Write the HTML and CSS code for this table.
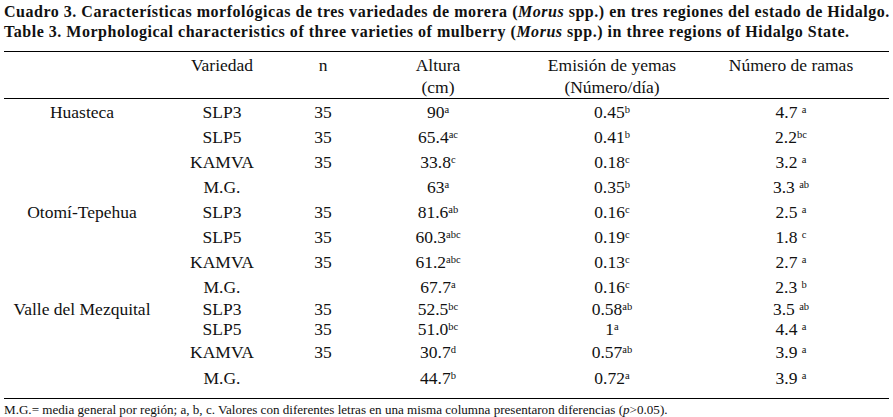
FILE: index.html
```html
<!DOCTYPE html>
<html lang="es">
<head>
<meta charset="utf-8">
<title>Cuadro 3</title>
<link rel="stylesheet" href="styles.css">
</head>
<body>
<div class="page">
  <div class="caption">
    <div class="cap-line">Cuadro 3. Características morfológicas de tres variedades de morera (<i>Morus</i> spp.) en tres regiones del estado de Hidalgo.</div>
    <div class="cap-line">Table 3. Morphological characteristics of three varieties of mulberry (<i>Morus</i> spp.) in three regions of Hidalgo State.</div>
  </div>
  <table class="data">
    <colgroup>
      <col class="c-region"><col class="c-var"><col class="c-n"><col class="c-alt"><col class="c-emi"><col class="c-ram"><col class="c-rest">
    </colgroup>
    <thead>
      <tr>
        <th></th>
        <th>Variedad</th>
        <th>n</th>
        <th>Altura<br>(cm)</th>
        <th>Emisión de yemas<br>(Número/día)</th>
        <th>Número de ramas</th>
        <th></th>
      </tr>
    </thead>
    <tbody>
      <tr><td>Huasteca</td><td>SLP3</td><td>35</td><td>90<sup>a</sup></td><td>0.45<sup>b</sup></td><td>4.7 <sup>a</sup></td><td></td></tr>
      <tr><td></td><td>SLP5</td><td>35</td><td>65.4<sup>ac</sup></td><td>0.41<sup>b</sup></td><td>2.2<sup>bc</sup></td><td></td></tr>
      <tr><td></td><td>KAMVA</td><td>35</td><td>33.8<sup>c</sup></td><td>0.18<sup>c</sup></td><td>3.2 <sup>a</sup></td><td></td></tr>
      <tr><td></td><td>M.G.</td><td></td><td>63<sup>a</sup></td><td>0.35<sup>b</sup></td><td>3.3 <sup>ab</sup></td><td></td></tr>
      <tr><td>Otomí-Tepehua</td><td>SLP3</td><td>35</td><td>81.6<sup>ab</sup></td><td>0.16<sup>c</sup></td><td>2.5 <sup>a</sup></td><td></td></tr>
      <tr><td></td><td>SLP5</td><td>35</td><td>60.3<sup>abc</sup></td><td>0.19<sup>c</sup></td><td>1.8 <sup>c</sup></td><td></td></tr>
      <tr><td></td><td>KAMVA</td><td>35</td><td>61.2<sup>abc</sup></td><td>0.13<sup>c</sup></td><td>2.7 <sup>a</sup></td><td></td></tr>
      <tr><td></td><td>M.G.</td><td></td><td>67.7<sup>a</sup></td><td>0.16<sup>c</sup></td><td>2.3 <sup>b</sup></td><td></td></tr>
      <tr class="tight"><td>Valle del Mezquital</td><td>SLP3</td><td>35</td><td>52.5<sup>bc</sup></td><td>0.58<sup>ab</sup></td><td>3.5 <sup>ab</sup></td><td></td></tr>
      <tr class="tight"><td></td><td>SLP5</td><td>35</td><td>51.0<sup>bc</sup></td><td>1<sup>a</sup></td><td>4.4 <sup>a</sup></td><td></td></tr>
      <tr class="wide"><td></td><td>KAMVA</td><td>35</td><td>30.7<sup>d</sup></td><td>0.57<sup>ab</sup></td><td>3.9 <sup>a</sup></td><td></td></tr>
      <tr class="wide last"><td></td><td>M.G.</td><td></td><td>44.7<sup>b</sup></td><td>0.72<sup>a</sup></td><td>3.9 <sup>a</sup></td><td></td></tr>
    </tbody>
  </table>
  <div class="note">M.G.= media general por región; a, b, c. Valores con diferentes letras en una misma columna presentaron diferencias (<i>p</i>&gt;0.05).</div>
</div>
</body>
</html>
```
FILE: styles.css
```css
html, body {
  margin: 0;
  padding: 0;
  background: #ffffff;
}

.page {
  padding: 0 4px;
  color: #111111;
  font-family: "Liberation Serif", "Times New Roman", serif;
}

.caption {
  padding-top: 2px;
  font-weight: bold;
  font-size: 16px;
  letter-spacing: 0.52px;
  line-height: 20px;
  white-space: nowrap;
}

.data {
  margin-top: 9px;
  width: 885px;
  border-collapse: collapse;
  table-layout: fixed;
  font-size: 17.5px;
  border-top: 1px solid #000;
  border-bottom: 1px solid #000;
}

.c-region { width: 156px; }
.c-var { width: 124px; }
.c-n { width: 78px; }
.c-alt { width: 152px; }
.c-emi { width: 196px; }
.c-ram { width: 162px; }
.c-rest { width: 17px; }

.data th {
  font-weight: normal;
  line-height: 22px;
  padding: 2px 0 0 0;
  vertical-align: top;
  text-align: center;
  border-bottom: 1px solid #000;
  white-space: nowrap;
}

.data td {
  height: 25px;
  padding: 0;
  text-align: center;
  vertical-align: middle;
  line-height: 20px;
  white-space: nowrap;
}

.data tr.tight td { height: 20px; }
.data tr.wide td { height: 26px; }
.data tr.last td { height: 26px; padding-bottom: 7px; }

.data sup {
  font-size: 10.5px;
  line-height: 0;
  vertical-align: 0.45em;
}

.note {
  padding-top: 3px;
  font-size: 13.1px;
  line-height: 15px;
  white-space: nowrap;
}
```
